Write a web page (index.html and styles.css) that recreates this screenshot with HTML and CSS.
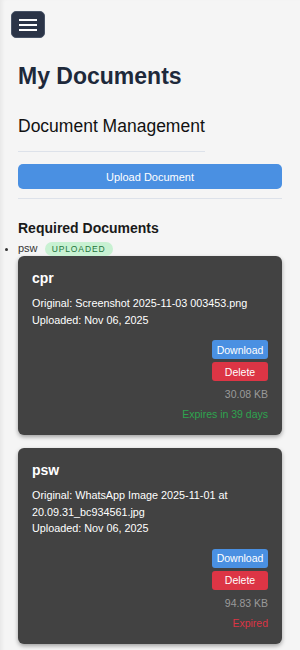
FILE: index.html
```html
<!DOCTYPE html>
<html>
<head>
	<title>My Documents</title>
	<link rel="stylesheet" href="styles.css">
</head>
<body>
	<button class="menu-btn" aria-label="Menu">
		<svg width="18" height="12" viewBox="0 0 18 12"><path d="M0 1h18M0 6h18M0 11h18" stroke="#fff" stroke-width="2"/></svg>
	</button>

	<main class="page">
		<h1>My Documents</h1>

		<section class="manage">
			<h2>Document Management</h2>
			<button class="btn btn-upload">Upload Document</button>
		</section>

		<section class="required">
			<h3>Required Documents</h3>
			<ul>
				<li>psw <span class="badge">UPLOADED</span>
					<div class="card">
						<h4>cpr</h4>
						<p>Original: Screenshot 2025-11-03 003453.png</p>
						<p>Uploaded: Nov 06, 2025</p>
						<div class="actions">
							<button class="btn btn-sm btn-download">Download</button>
							<button class="btn btn-sm btn-delete">Delete</button>
							<span class="size">30.08 KB</span>
							<span class="expiry ok">Expires in 39 days</span>
						</div>
					</div>
					<div class="card">
						<h4>psw</h4>
						<p>Original: WhatsApp Image 2025-11-01 at 20.09.31_bc934561.jpg</p>
						<p>Uploaded: Nov 06, 2025</p>
						<div class="actions">
							<button class="btn btn-sm btn-download">Download</button>
							<button class="btn btn-sm btn-delete">Delete</button>
							<span class="size">94.83 KB</span>
							<span class="expiry gone">Expired</span>
						</div>
					</div>
				</li>
			</ul>
		</section>
	</main>
</body>
</html>
```

FILE: styles.css
```css
body { margin: 0; background: #f5f5f5; font-family: "Liberation Sans", Arial, sans-serif; color: #222; box-shadow: inset 4px 0 4px -2px rgba(0,0,0,.06); min-height: 650px; }
button { font-family: inherit; cursor: pointer; }

.menu-btn { display: flex; align-items: center; justify-content: center; margin: 11px 0 0 11px; width: 34px; height: 27px; padding: 0; background: #2b3447; border: 1px solid #485366; border-radius: 5px; }

.page { padding: 0 18px; }
h1 { margin: 24px 0 0; font-size: 23px; font-weight: bold; color: #1e293b; line-height: 28px; }

.manage { border-bottom: 1px solid #dde2ea; padding-bottom: 9px; }
.manage h2 { display: inline-block; margin: 25px 0 0; padding-bottom: 14px; border-bottom: 1px solid #dde2ea; font-size: 17.5px; font-weight: normal; color: #111; line-height: 22px; }
.btn { border: 0; color: #fff; }
.btn-upload { display: block; width: 100%; height: 25px; margin-top: 12px; padding: 0; border-radius: 5px; background: #4a90e2; font-size: 11px; }

.required h3 { margin: 20px 0 4px; font-size: 14px; font-weight: bold; color: #1a1a1a; line-height: 18px; }
.required ul { margin: 0; padding: 0; }
.required li { font-size: 11px; color: #333; line-height: 15px; }
.badge { display: inline-block; margin-left: 4px; padding: 0 7px; border-radius: 8px; background: #c8f1d2; color: #23743b; font-size: 8.5px; letter-spacing: .9px; line-height: 14px; }

.card { margin-bottom: 13px; padding: 14px 14px 13px; border-radius: 6px; background: #424242; color: #fff; box-shadow: 0 2px 4px rgba(0,0,0,.35); }
.card h4 { margin: 0 0 8px; font-size: 14px; line-height: 17px; }
.card p { margin: 0; font-size: 10.8px; line-height: 16.5px; }
.actions { display: flex; flex-direction: column; align-items: flex-end; margin-top: 12px; }
.btn-sm { width: 56px; height: 19px; margin-bottom: 3px; padding: 0; border-radius: 3px; font-size: 10.5px; }
.btn-download { background: #4a90e2; }
.btn-delete { background: #dc3545; }
.size { margin-top: 2px; color: #9a9a9a; font-size: 10.5px; line-height: 16px; }
.expiry { margin-top: 4px; font-size: 10.5px; line-height: 16px; }
.expiry.ok { color: #2ea44f; }
.expiry.gone { color: #dc3545; }
```
